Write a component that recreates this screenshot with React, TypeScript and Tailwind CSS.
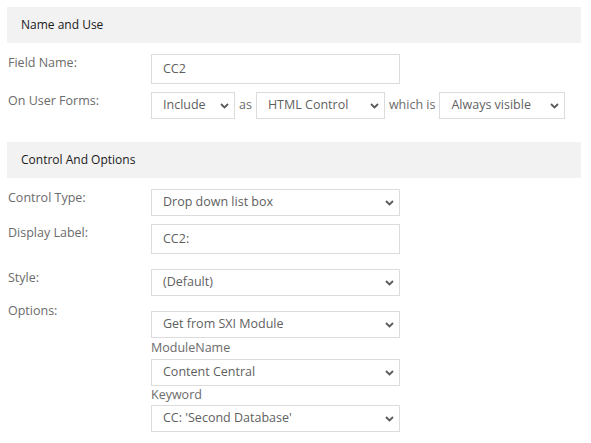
import React from 'react';

const Chevron: React.FC = () => (
  <svg className="pointer-events-none absolute right-[5px] top-1/2 -translate-y-1/2" width="9" height="6" viewBox="0 0 9 6">
    <path d="M1 1l3.5 3.5L8 1" fill="none" stroke="#5a5a5a" strokeWidth="1.8" />
  </svg>
);

const Select: React.FC<{ value: string; className?: string }> = ({ value, className = '' }) => (
  <div className={`relative h-[27px] border border-[#dcdcdc] bg-white ${className}`}>
    <div className="flex h-full items-center pl-[11px] text-[12.5px] text-[#5f5f5f]">{value}</div>
    <Chevron />
  </div>
);

const TextInput: React.FC<{ value: string }> = ({ value }) => (
  <div className="flex h-[30px] w-[249px] items-center border border-[#dcdcdc] bg-white pl-[11px] text-[12.5px] text-[#5f5f5f]">
    {value}
  </div>
);

const SectionHeader: React.FC<{ title: string }> = ({ title }) => (
  <div className="flex h-[36px] items-center bg-[#f2f2f2] pl-[14px] text-[12px] font-medium text-[#1a1a1a]">
    {title}
  </div>
);

const Row: React.FC<{ label: string; className?: string; children: React.ReactNode }> = ({ label, className = '', children }) => (
  <div className={`flex ${className}`}>
    <div className="w-[144px] shrink-0 pl-[1px] text-[12.5px] leading-[18px] text-[#6b6b6b]">{label}</div>
    <div className="flex flex-col">{children}</div>
  </div>
);

const App: React.FC = () => {
  return (
    <div className="min-h-screen w-[591px] bg-white px-[7px] pt-[7px]" style={{ fontFamily: '"Open Sans", "Liberation Sans", sans-serif' }}>
      <div className="w-[574px]">
        <SectionHeader title="Name and Use" />
        <Row label="Field Name:" className="mt-[11px]">
          <TextInput value="CC2" />
        </Row>
        <Row label="On User Forms:" className="mt-[8px]">
          <div className="flex items-center text-[12.5px] text-[#6b6b6b]">
            <Select value="Include" className="w-[84px]" />
            <span className="px-[4px]">as</span>
            <Select value="HTML Control" className="w-[129px]" />
            <span className="px-[4px]">which is</span>
            <Select value="Always visible" className="w-[126px]" />
          </div>
        </Row>

        <div className="mt-[23px]">
          <SectionHeader title="Control And Options" />
        </div>
        <Row label="Control Type:" className="mt-[11px]">
          <Select value="Drop down list box" className="w-[249px]" />
        </Row>
        <Row label="Display Label:" className="mt-[8px]">
          <TextInput value="CC2:" />
        </Row>
        <Row label="Style:" className="mt-[15px]">
          <Select value="(Default)" className="w-[249px]" />
        </Row>
        <Row label="Options:" className="mt-[6px]">
          <div className="mt-[9px]">
            <Select value="Get from SXI Module" className="w-[249px]" />
          </div>
          <div className="flex h-[21px] items-center text-[12.5px] text-[#6b6b6b]">ModuleName</div>
          <Select value="Content Central" className="w-[249px]" />
          <div className="flex h-[19px] items-center text-[12.5px] text-[#6b6b6b]">Keyword</div>
          <Select value="CC: 'Second Database'" className="w-[249px]" />
        </Row>
      </div>
    </div>
  );
};

export default App;
